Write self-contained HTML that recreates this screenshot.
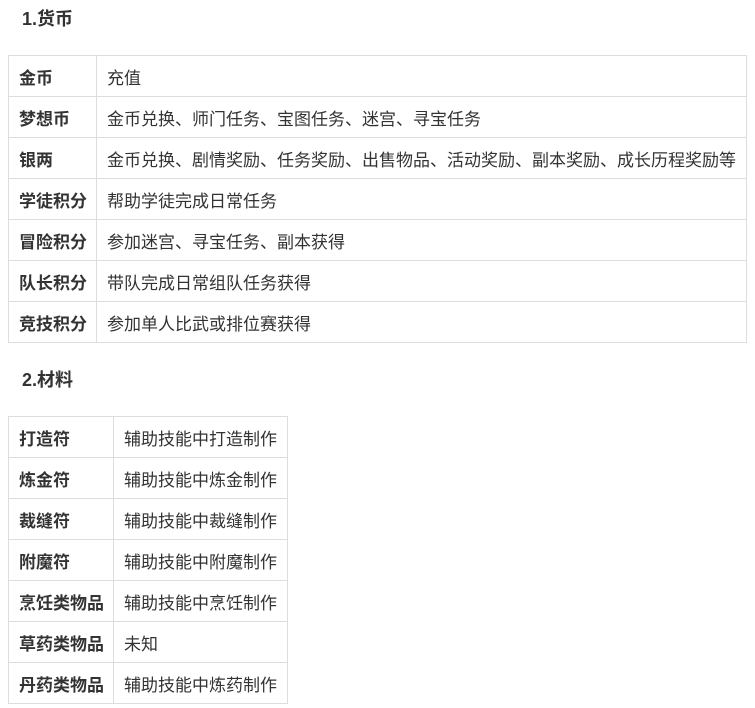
<!DOCTYPE html>
<html><head><meta charset="utf-8"><style>
body{margin:0;background:#fff;font-family:"Liberation Sans","Noto Sans CJK SC",sans-serif;color:#333;width:755px;height:708px;overflow:hidden;position:relative}
h3{position:absolute;margin:0;font-size:18px;font-weight:bold;color:#333;line-height:20px}
table{position:absolute;border-collapse:collapse;font-size:17px}
td{border:1px solid #ddd;height:41px;padding:0 0 0 10px;box-sizing:border-box;white-space:nowrap}
td.k{font-weight:bold}
</style></head><body>
<h3 style="left:22px;top:9px">1.货币</h3>
<table style="left:8px;top:55px;width:739px">
<tr><td class="k" style="width:88px">金币</td><td>充值</td></tr>
<tr><td class="k">梦想币</td><td>金币兑换、师门任务、宝图任务、迷宫、寻宝任务</td></tr>
<tr><td class="k">银两</td><td>金币兑换、剧情奖励、任务奖励、出售物品、活动奖励、副本奖励、成长历程奖励等</td></tr>
<tr><td class="k">学徒积分</td><td>帮助学徒完成日常任务</td></tr>
<tr><td class="k">冒险积分</td><td>参加迷宫、寻宝任务、副本获得</td></tr>
<tr><td class="k">队长积分</td><td>带队完成日常组队任务获得</td></tr>
<tr><td class="k">竞技积分</td><td>参加单人比武或排位赛获得</td></tr>
</table>
<h3 style="left:22px;top:370px">2.材料</h3>
<table style="left:8px;top:416px;width:280px">
<tr><td class="k" style="width:105px">打造符</td><td>辅助技能中打造制作</td></tr>
<tr><td class="k">炼金符</td><td>辅助技能中炼金制作</td></tr>
<tr><td class="k">裁缝符</td><td>辅助技能中裁缝制作</td></tr>
<tr><td class="k">附魔符</td><td>辅助技能中附魔制作</td></tr>
<tr><td class="k">烹饪类物品</td><td>辅助技能中烹饪制作</td></tr>
<tr><td class="k">草药类物品</td><td>未知</td></tr>
<tr><td class="k">丹药类物品</td><td>辅助技能中炼药制作</td></tr>
</table>
</body></html>
